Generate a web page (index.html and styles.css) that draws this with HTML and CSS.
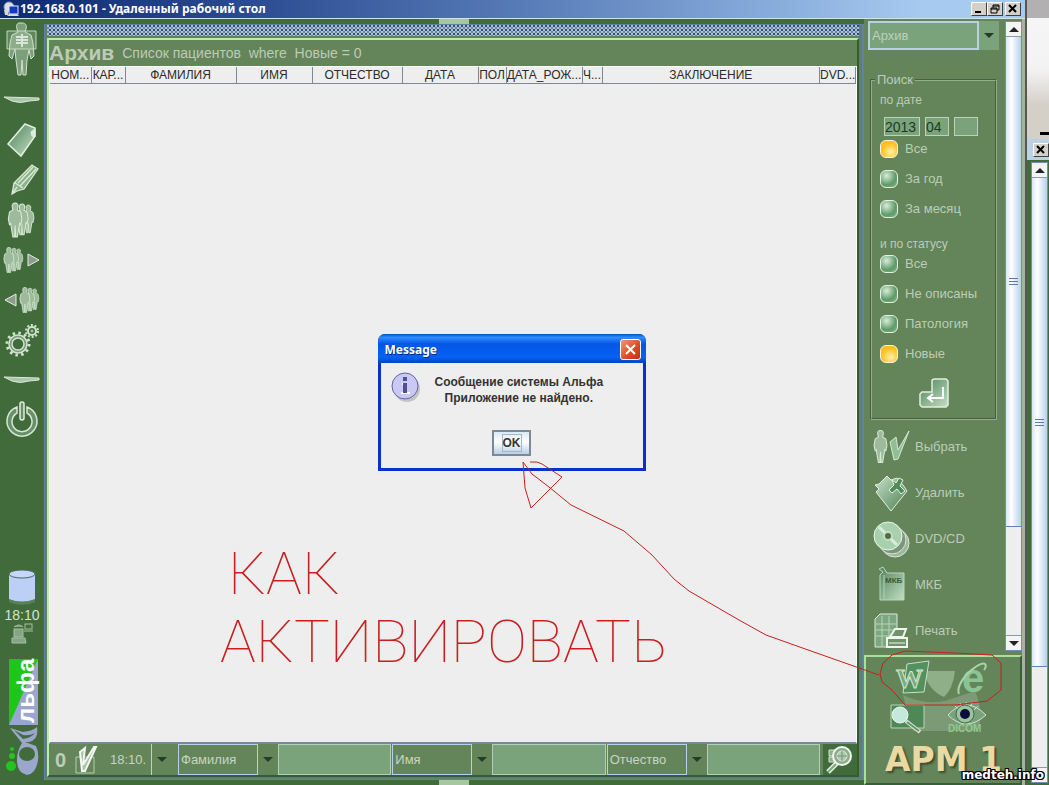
FILE: index.html
```
<!DOCTYPE html>
<html lang="ru">
<head>
    <meta charset="UTF-8">
    <meta name="viewport" content="width=device-width, initial-scale=1.0">
    <title>192.168.0.101 - Удаленный рабочий стол</title>
    <link rel="stylesheet" href="styles.css">
</head>
<body>
    <!-- Shared icon shapes -->
    <svg class="defs" width="0" height="0">
        <defs>
            <linearGradient id="glass" x1="0" y1="0" x2="1" y2="1">
                <stop offset="0" stop-color="#4c8258"/>
                <stop offset="1" stop-color="#c4dfc5"/>
            </linearGradient>
            <linearGradient id="glass2" x1="0" y1="0" x2="1" y2="1">
                <stop offset="0" stop-color="#c8e2c8"/>
                <stop offset="1" stop-color="#4c7f55"/>
            </linearGradient>
            <symbol id="person" viewBox="0 0 14 32">
                <path d="M7 1c2 0 3 1.500 2.500 3.500L9 7l3 2 1 6-1 5-1-1-1 6-1 6H7.500L7 21l-.5 10H5l-1-6-1-6-1 1-1-5 1-6 3-2-.5-2.500C4 2.500 5 1 7 1z" fill="#9dbb9b" stroke="#d5e8d4" stroke-width="1"/>
            </symbol>
            <symbol id="people" viewBox="0 0 28 34">
                <use href="#person" x="13" y="2" width="14" height="28"/>
                <use href="#person" x="7" y="1" width="14" height="31"/>
                <use href="#person" x="0" y="0" width="15" height="34"/>
            </symbol>
        </defs>
    </svg>

    <div class="screen">
        <div class="remote">
            <header class="titlebar">
                <svg width="18" height="17" viewBox="0 0 18 17">
                    <circle cx="7" cy="6" r="5" fill="#d9dfe8" stroke="#8a97ab"/>
                    <rect x="7" y="5" width="9" height="8" fill="#1338c8" stroke="#e6e6f2"/>
                    <path d="M5 15h12l-2-2H7zM2 9h4v5H3z" fill="#d8d8d0"/>
                </svg>
                <h1>192.168.0.101 - Удаленный рабочий стол</h1>
                <div class="window-buttons">
                    <button class="win-btn" aria-label="Свернуть"><svg width="12" height="10"><path d="M2 8h6" stroke="#000" stroke-width="2"/></svg></button>
                    <button class="win-btn" aria-label="Восстановить"><svg width="12" height="10"><path d="M4 4V1h6v5H8M4 2h6M2 4h6v5H2zM2 5h6" fill="none" stroke="#000"/></svg></button>
                    <button class="win-btn close" aria-label="Закрыть"><svg width="12" height="10"><path d="M2 1l7 7M9 1L2 8" stroke="#000" stroke-width="2"/></svg></button>
                </div>
            </header>

            <div class="workspace">
                <nav class="toolbar">
                    <button class="tool figure" aria-label="Пациент">
                        <svg width="34" height="56" viewBox="0 0 34 56">
                            <path d="M17 1c4 0 5 3 4 6l-1 3 6 3 2 8 1 13-3 3-2-9-2 10-1 15h-3l-1-15-1 15h-3l-2-15-1-11-3 10-3-3 1-13 2-8 6-3-1-3c-1-3 0-6 2-6z" fill="#7d9e7b" stroke="#d2e4cf"/>
                            <path d="M2 9h29v18H2z" fill="#bdd6b9" fill-opacity=".25" stroke="#c6d8c0"/>
                            <path d="M11 15h5m2 0h5M11 18h5m2 0h5M11 21h5m2 0h5M17 12v13" stroke="#d8e8d6" stroke-width="2"/>
                        </svg>
                    </button>
                    <div class="divider"><svg width="38" height="8"><path d="M1 1l35 1v2l-10 1q-9 3-17 0z" fill="#a8c6a8" stroke="#dbe9d8"/></svg></div>
                    <button class="tool" aria-label="Документ">
                        <svg width="34" height="38" viewBox="0 0 34 38"><path d="M20 3l10 4v8l-14 20L3 23z" fill="url(#glass)" stroke="#e0f0df" stroke-width="1.500"/><path d="M30 8l-4 3 1 4 3 1z" fill="#dcecdc" stroke="#e0f0df"/></svg>
                    </button>
                    <button class="tool" aria-label="Правка">
                        <svg width="34" height="38" viewBox="0 0 34 38"><path d="M7 33l2-11L27 4l6 4-14 20-7 2zM10 22l8 5M13 22L28 6M15 25L31 8M7 33l5-7" fill="#8cb28b" stroke="#dcecd9" stroke-width="1.300"/></svg>
                    </button>
                    <button class="tool" aria-label="Пациенты"><svg width="30" height="36"><use href="#people" width="30" height="36"/></svg></button>
                    <button class="tool" aria-label="Следующие">
                        <svg width="38" height="28"><use href="#people" width="22" height="28"/><path d="M25 8l11 6-11 6z" fill="#8e9c8c" stroke="#e2efdf"/></svg>
                    </button>
                    <button class="tool" aria-label="Предыдущие">
                        <svg width="38" height="28"><use href="#people" x="16" width="22" height="28"/><path d="M13 8L2 14l11 6z" fill="#8e9c8c" stroke="#e2efdf"/></svg>
                    </button>
                    <button class="tool" aria-label="Настройки">
                        <svg width="36" height="36" viewBox="0 0 36 36" fill="none" stroke="#cfe3cd">
                            <circle cx="14" cy="22" r="9" fill="#79997a" stroke-width="1.500"/>
                            <circle cx="14" cy="22" r="11" stroke-width="3" stroke-dasharray="2.500 3.260"/>
                            <circle cx="14" cy="22" r="6" fill="#426b3c" stroke-width="1.500"/>
                            <circle cx="28" cy="9" r="4" stroke-width="2"/>
                            <circle cx="28" cy="9" r="6" stroke-width="2" stroke-dasharray="2 1.770"/>
                            <circle cx="28" cy="9" r="1"/>
                        </svg>
                    </button>
                    <div class="divider"><svg width="38" height="8"><path d="M1 1l35 1v2l-10 1q-9 3-17 0z" fill="#a8c6a8" stroke="#dbe9d8"/></svg></div>
                    <button class="tool" aria-label="Выход">
                        <svg width="34" height="38" viewBox="0 0 34 38" fill="none">
                            <path d="M12 6A15 15 0 1 0 22 6v6a10 10 0 1 1-10 0z" fill="#68906a" stroke="#d6e7d3" stroke-width="1.500"/>
                            <rect x="15" y="1" width="4" height="18" rx="2" fill="#68906a" stroke="#e0eedf" stroke-width="1.500"/>
                        </svg>
                    </button>

                    <div class="status">
                        <svg width="30" height="38" viewBox="0 0 30 38">
                            <path d="M2 29v4q13 6 26 0v-4z" fill="#54805a"/>
                            <path d="M2 5v25q13 5 26 0V5z" fill="#bcd0f5"/>
                            <ellipse cx="15" cy="5" rx="13" ry="4" fill="#c5d7fb" stroke="#4a6a64"/>
                        </svg>
                        <time class="clock">18:10</time>
                        <svg width="24" height="22" viewBox="0 0 24 22" fill="#84a684" stroke="#a5c0a4">
                            <rect x="4" y="6" width="9" height="8"/><path d="M2 15h13l1 5H2zM4 4q5-4 9 0"/><rect x="15" y="1" width="7" height="5" fill="none"/><path d="M14 8h9"/>
                        </svg>
                    </div>
                    <svg class="logo" width="36" height="117" viewBox="0 0 36 117">
                        <path d="M5 0h29v66H5z" fill="#1fc51b"/>
                        <path d="M34 0v66H5z" fill="#9ba6cd"/>
                        <text class="logo-text" transform="translate(30 64) rotate(-90)">льфа</text>
                        <path d="M6 69l13 4q10-1 14-5 2 13-8 15h-4l11 4q3 6 2 14-2 14-11 15-10-2-10-15 0-9 5-17z" fill="#9ba6cd"/>
                        <path d="M10 71l9 9q8-1 12-6-5 3-12 2z" fill="#426b3c"/>
                        <ellipse cx="23" cy="95" rx="8" ry="7" fill="#426b3c"/>
                        <circle cx="7" cy="107" r="5" fill="#22c41d"/><circle cx="8" cy="97" r="3" fill="#22c41d"/><circle cx="8" cy="90" r="2" fill="#22c41d"/>
                    </svg>
                </nav>

                <div class="center">
                    <div class="handle"></div>
                    <main class="frame">
                        <div class="frame-grip"></div>
                        <div class="archive">
                            <div class="archive-head">
                                <h2>Архив</h2>
                                <p>Список пациентов&nbsp; where&nbsp; Новые = 0</p>
                            </div>
                            <div class="table-wrap">
                                <table class="patients">
                                    <thead>
                                        <tr>
                                            <th class="w-number">НОМ...</th>
                                            <th class="w-card">КАР...</th>
                                            <th class="w-surname">ФАМИЛИЯ</th>
                                            <th class="w-date">ИМЯ</th>
                                            <th class="w-patronymic">ОТЧЕСТВО</th>
                                            <th class="w-date">ДАТА</th>
                                            <th class="w-sex">ПОЛ</th>
                                            <th class="w-date">ДАТА_РОЖ...</th>
                                            <th class="w-h">Ч...</th>
                                            <th>ЗАКЛЮЧЕНИЕ</th>
                                            <th class="w-dvd">DVD...</th>
                                        </tr>
                                    </thead>
                                </table>
                            </div>
                            <div class="filterbar">
                                <div class="counter">
                                    <strong>0</strong>
                                    <svg width="24" height="32" viewBox="0 0 24 32"><path d="M2 13h18v16H2z" fill="none" stroke="#b4cdb1"/><path d="M6 8l5-4-2 17L20 3h2L11 27H8z" fill="#a9c1a7" stroke="#f2f7f0" stroke-width="2"/></svg>
                                </div>
                                <div class="combo time">
                                    <select aria-label="Время"><option>18:10.</option></select>
                                    <span class="arrow"></span>
                                </div>
                                <div class="filter">
                                    <div class="combo"><select aria-label="Поле 1"><option>Фамилия</option></select><span class="arrow"></span></div>
                                    <input type="text" aria-label="Фамилия">
                                </div>
                                <div class="filter">
                                    <div class="combo"><select aria-label="Поле 2"><option>Имя</option></select><span class="arrow"></span></div>
                                    <input type="text" aria-label="Имя">
                                </div>
                                <div class="filter">
                                    <div class="combo"><select aria-label="Поле 3"><option>Отчество</option></select><span class="arrow"></span></div>
                                    <input type="text" aria-label="Отчество">
                                </div>
                                <button class="find" aria-label="Найти">
                                    <svg width="30" height="30" viewBox="0 0 30 30"><path d="M5 5h7v6H5zM5 12h6v5H5z" fill="#8fb08e" stroke="#d4e5d2"/><path d="M13 18L4 27" stroke="#e4f1e2" stroke-width="5"/><path d="M12 19l-8 8" stroke="#80a880" stroke-width="2"/><circle cx="18" cy="11" r="9" fill="#8cac8b" stroke="#f0f6ef" stroke-width="2"/><circle cx="18" cy="11" r="5" fill="#b0cbaf" stroke="#e0ecdf"/><path d="M18 6v10M13 11h10" stroke="#73946f"/></svg>
                                </button>
                            </div>
                        </div>
                    </main>
                    <div class="handle"></div>
                </div>

                <aside class="side">
                    <div class="side-scroll">
                        <div class="side-content">
                            <div class="combo archive-select">
                                <select aria-label="Раздел"><option>Архив</option></select>
                                <span class="arrow"></span>
                            </div>
                            <fieldset class="search">
                                <legend>Поиск</legend>
                                <p>по дате</p>
                                <div class="date-row">
                                    <input class="year" type="text" value="2013" aria-label="Год">
                                    <input type="text" value="04" aria-label="Месяц">
                                    <input type="text" aria-label="День">
                                </div>
                                <label class="choice"><input type="radio" name="period" checked>Все</label>
                                <label class="choice"><input type="radio" name="period">За год</label>
                                <label class="choice"><input type="radio" name="period">За месяц</label>
                                <p class="by-status">и по статусу</p>
                                <label class="choice"><input type="radio" name="status">Все</label>
                                <label class="choice"><input type="radio" name="status">Не описаны</label>
                                <label class="choice"><input type="radio" name="status">Патология</label>
                                <label class="choice"><input type="radio" name="status" checked>Новые</label>
                                <button class="enter" aria-label="Применить">
                                    <svg width="30" height="30" viewBox="0 0 30 30"><path d="M16 1h11l2 2v24l-2 2H3l-2-2V16l2-2h10V3q0-2 3-2z" fill="url(#glass)" stroke="#e2f0e0" stroke-width="1.500"/><path d="M24 9v11H9m5-4l-5 4 5 4" fill="none" stroke="#fff" stroke-width="2"/></svg>
                                </button>
                            </fieldset>
                            <div class="actions">
                                <button class="action">
                                    <svg width="38" height="38" viewBox="0 0 38 38"><use href="#person" x="1" y="1" width="15" height="35"/><path d="M18 14l6-5 2 13L37 3 26 31l-4 1z" fill="#8fbf94" stroke="#d6e8d4"/></svg>
                                    Выбрать
                                </button>
                                <button class="action">
                                    <svg width="38" height="38" viewBox="0 0 38 38"><path d="M3 11l4-1 8-8 4 4 6-2 6 7 4 6-16 20L4 18l3-3z" fill="url(#glass2)" stroke="#dfeedd"/><path d="M20 6l4 3 3-5 4 2-3 6 5 5-4 3-4-5-5 4-3-3 5-5z" fill="#4e8b58" stroke="#e5f2e4"/></svg>
                                    Удалить
                                </button>
                                <button class="action">
                                    <svg width="38" height="38" viewBox="0 0 38 38"><circle cx="23" cy="23" r="14" fill="#a0b79c" stroke="#dce5d9"/><circle cx="20" cy="20" r="14" fill="#78987a" stroke="#dce5d9"/><circle cx="16" cy="16" r="14" fill="#a9d0ac" stroke="#edf5ec"/><circle cx="16" cy="16" r="4" fill="#4f6e49" stroke="#c5dcc3" stroke-width="2"/><path d="M7 7l6 6m6 6l6 6" stroke="#d8edda" stroke-width="3"/></svg>
                                    DVD/CD
                                </button>
                                <button class="action">
                                    <svg width="38" height="38" viewBox="0 0 38 38"><path d="M8 9l3-3-4-3 4-2 4 6h17v27H8z" fill="url(#glass)" stroke="#bed4bc"/><path d="M12 9v24" stroke="#b6d0b3"/><text class="book-text" x="13" y="17">МКБ</text></svg>
                                    МКБ
                                </button>
                                <button class="action">
                                    <svg width="38" height="38" viewBox="0 0 38 38"><path d="M3 7l5-5h17v33H3z" fill="#7ca77f" stroke="#dcecd9"/><path d="M4 12h20M4 18h20M4 24h20M10 4v30M17 4v30" stroke="#bad3b8"/><path d="M18 25l5-8h11l-3 8zM15 26h20v9H15z" fill="#71926d" stroke="#eef6ed" stroke-width="2"/><path d="M17 31h16" stroke="#eef6ed"/></svg>
                                    Печать
                                </button>
                            </div>
                        </div>
                        <div class="scrollbar">
                            <span class="scroll-btn"><i class="up"></i></span>
                            <span class="thumb"><i class="grip"></i></span>
                            <span class="scroll-btn last"><i class="down"></i></span>
                        </div>
                    </div>
                    <div class="launcher">
                        <div class="apps">
                            <svg class="swoosh" width="90" height="76" viewBox="0 0 90 76"><path d="M24 8h32q-2 18-11 26Q30 28 24 8z" fill="#8faf89"/><path d="M4 32q20 10 42 6l30-10q10 24 2 40H14z" fill="#89a684" fill-opacity=".65"/></svg>
                            <button class="app" aria-label="Word">
                                <svg width="50" height="40" viewBox="0 0 50 40"><path d="M22 5l22-3-5 31-21 1z" fill="#548f5f" stroke="#c6e1c8"/><text class="word-text" x="11" y="29">W</text></svg>
                            </button>
                            <button class="app" aria-label="Internet Explorer">
                                <svg width="50" height="40" viewBox="0 0 50 40"><text class="ie-text" x="19" y="33">e</text><path d="M16 35Q13 28 24 15 38 2 42 5q2 2-1 6" fill="none" stroke="#a8d4ac" stroke-width="2"/></svg>
                            </button>
                            <button class="app" aria-label="Просмотр">
                                <svg width="50" height="40" viewBox="0 0 50 40"><path d="M6 5h33v23H6z" fill="#4f8857" stroke="#b7d5b6"/><path d="M21 21l14 11" stroke="#dce9da" stroke-width="4"/><path d="M22 22l12 9" stroke="#69906a" stroke-width="2"/><circle cx="15" cy="15" r="8" fill="#c6e8dc" stroke="#edf7ee"/></svg>
                            </button>
                            <button class="app" aria-label="DICOM">
                                <svg width="50" height="40" viewBox="0 0 50 40"><path d="M5 15Q23-5 43 15 23 33 5 15zM12 6l4 4M17 3l2 5M23 2v5M29 3l-2 5M35 6l-4 4" fill="#79a17c" stroke="#d0e3cd"/><circle cx="22" cy="14" r="9" fill="#9dc3a0" stroke="#3d6d48"/><circle cx="22" cy="14" r="5" fill="#0c0d38"/><text class="dicom-text" x="5" y="32">DICOM</text></svg>
                            </button>
                        </div>
                        <p class="station">АРМ 1</p>
                    </div>
                </aside>
            </div>

            <div class="dialog" role="dialog" aria-labelledby="dialogTitle">
                <div class="dialog-title">
                    <h2 id="dialogTitle">Message</h2>
                    <button class="dialog-close" aria-label="Закрыть"><svg width="17" height="17"><path d="M4 4l9 9M13 4l-9 9" stroke="#fff" stroke-width="2"/></svg></button>
                </div>
                <div class="dialog-body">
                    <svg width="32" height="32" viewBox="0 0 32 32"><circle cx="16" cy="17" r="13" fill="#a9a9a9" fill-opacity=".6"/><circle cx="14" cy="14" r="13" fill="#c9c9f5" stroke="#66669c"/><path d="M11 12h3v8M10 21h9" stroke="#fff" fill="none" stroke-width="2"/><path d="M12 11h4v10h-4zM12 5h4v4h-4z" fill="#50508a"/></svg>
                    <p>Сообщение системы Альфа<br>Приложение не найдено.</p>
                </div>
                <button class="ok"><span>OK</span></button>
            </div>
        </div>

        <div class="behind">
            <div class="behind-top"></div>
            <div class="behind-title"><button class="win-btn" aria-label="Закрыть окно"><svg width="12" height="10"><path d="M2 1l7 7M9 1L2 8" stroke="#000" stroke-width="2"/></svg></button></div>
            <div class="scrollbar">
                <span class="scroll-btn"><i class="up"></i></span>
                <span class="thumb"><i class="grip"></i></span>
                <span class="scroll-btn last"><i class="down"></i></span>
            </div>
        </div>

        <!-- Red pen notes over the desktop -->
        <svg class="notes" width="1049" height="785" viewBox="0 0 1049 785">
            <text x="228" y="594">КАК</text>
            <text x="220" y="662">АКТИВИРОВАТЬ</text>
            <path d="M530 462h7l5 2 20 13-31 31-6-20-2-26 9 12 17 13 22 18 53 26 28 24 22 24 15 12 50 29 27 15 45 16 68 24"/>
            <path d="M880 674l3-11 9-8 13-4 50 2 37 2 9 8v27l-14 11-32 4h-50l-13-15-10-8z"/>
        </svg>
        <p class="watermark">medteh.info</p>
    </div>
</body>
</html>
```
FILE: styles.css
```
* {
    margin: 0;
    padding: 0;
    box-sizing: border-box;
}

body {
    font-family: "Liberation Sans", Arial, sans-serif;
    font-size: 13px;
    line-height: 16px;
    color: #bccdb8;
    background: #426b3c;
    overflow: hidden;
}

button,
input,
select {
    font: inherit;
    color: inherit;
    border: none;
    border-radius: 0;
    background: none;
    appearance: none;
    min-width: 0;
}

svg {
    display: block;
    flex: none;
    overflow: visible;
}

.defs {
    position: absolute;
}

.screen {
    position: relative;
    display: flex;
    height: 100vh;
}

.remote {
    position: relative;
    flex: 1;
    min-width: 0;
    display: flex;
    flex-direction: column;
    border-right: 2px solid #59584f;
}

/* Title bar */
.titlebar {
    display: flex;
    align-items: center;
    height: 19px;
    padding: 0 4px 0 2px;
    background: linear-gradient(90deg, #0d2a70, #2b4b91 24%, #5f83bd 55%, #a6caf0 90%);
    border-bottom: 1px solid #d6e2e0;
}

.titlebar h1 {
    flex: 1;
    font: bold 12px/16px "Noto Sans", Tahoma, sans-serif;
    color: #fff;
}

.window-buttons {
    display: flex;
}

.win-btn {
    width: 16px;
    height: 14px;
    padding: 1px;
    background: #d4d0c8;
    border: 1px solid;
    border-color: #fff #404040 #404040 #fff;
}

.win-btn.close {
    margin-left: 2px;
}

.workspace {
    flex: 1;
    display: flex;
    min-height: 0;
}

/* Left toolbar */
.toolbar {
    width: 44px;
    display: flex;
    flex-direction: column;
    align-items: center;
    padding-bottom: 9px;
}

.tool,
.divider {
    height: 40px;
    width: 44px;
    display: flex;
    align-items: center;
    justify-content: center;
}

.tool.figure {
    height: 61px;
}

.status {
    margin-top: auto;
    margin-bottom: 14px;
    display: flex;
    flex-direction: column;
    align-items: center;
}

.clock {
    font-size: 14px;
    color: #d4e2d0;
}

.logo-text {
    font: bold 24px "Liberation Sans", Arial, sans-serif;
    fill: #fff;
}

/* Center frame */
.center {
    flex: 1;
    min-width: 0;
    display: flex;
    flex-direction: column;
    align-items: center;
}

.handle {
    width: 30px;
    height: 5px;
    background: #a8c6a4;
}

.frame {
    flex: 1;
    width: 100%;
    min-height: 0;
    display: flex;
    flex-direction: column;
    padding: 0 3px 2px 2px;
    border: 1px solid #5f83a6;
    border-right-width: 2px;
    background: #61806c;
}

.frame-grip {
    height: 11px;
    margin-bottom: 2px;
    background-color: #a9c0de;
    background-image:
        conic-gradient(#35506c 25%, transparent 0),
        conic-gradient(#35506c 25%, transparent 0);
    background-size: 4px 4px;
    background-position: 0 0, 2px 2px;
    background-image:
        linear-gradient(#35506c, #35506c),
        linear-gradient(#35506c, #35506c);
    background: conic-gradient(#35506c 25%, #a9c0de 0 50%, #6d87a5 0 75%, #a9c0de 0) 0 0 / 4px 4px;
}

.archive {
    flex: 1;
    min-height: 0;
    display: flex;
    flex-direction: column;
    background: #64845a;
    border: 2px solid;
    border-color: #b4f0a4 #325c36 #325c36 #b4f0a4;
}

.archive-head {
    display: flex;
    align-items: center;
    gap: 8px;
    height: 26px;
    color: #bdcbb9;
}

.archive-head h2 {
    font-size: 21px;
    line-height: 24px;
}

.archive-head p {
    font-size: 14px;
}

.table-wrap {
    flex: 1;
    background: #eee;
    border: 1px solid #fff;
    border-bottom: 2px solid #70869a;
}

.patients {
    width: 100%;
    table-layout: fixed;
    border-collapse: collapse;
    font-size: 12px;
    line-height: 14px;
    color: #2b2b2b;
}

.patients th {
    height: 16px;
    font-weight: normal;
    white-space: nowrap;
    overflow: hidden;
    border-right: 1px solid #7a8a99;
    border-bottom: 1px solid #7a8a99;
}

.w-number { width: 41px; }
.w-card { width: 34px; }
.w-surname { width: 111px; }
.w-date { width: 76px; }
.w-patronymic { width: 90px; }
.w-sex { width: 28px; }
.w-h { width: 20px; }
.w-dvd { width: 36px; }

/* Filter bar */
.filterbar {
    display: flex;
    height: 31px;
}

.counter {
    display: flex;
    align-items: center;
    gap: 8px;
    padding-left: 6px;
    width: 59px;
}

.counter strong {
    font-size: 20px;
    color: #bccdb8;
}

.combo {
    display: flex;
}

.combo select {
    flex: 1;
    padding: 0 2px;
    border: 1px solid #b8cfe5;
    color: #c6d6c2;
}

.arrow {
    width: 20px;
    display: flex;
    align-items: center;
    justify-content: center;
}

.arrow::after {
    content: "";
    border: 5px solid transparent;
    border-top-color: #263c27;
    border-bottom: 0;
}

.combo.time {
    width: 70px;
    padding-right: 6px;
}

.combo.time select {
    border-left: none;
    border-top: none;
    border-bottom: none;
}

.filter {
    flex: 1;
    min-width: 0;
    display: grid;
    grid-template-columns: 100px 1fr;
    padding-right: 1px;
}

.filter input {
    width: 100%;
    background: #7ba37b;
    border: 1px solid #b5cdb9;
    color: #203b23;
}

.find {
    width: 34px;
    margin-left: 2px;
    padding-left: 1px;
    background: #426b3c;
}

/* Right panel */
.side {
    width: 161px;
    display: flex;
    flex-direction: column;
    background: #64845a;
    border-right: 3px solid #a5b39c;
}

.side-scroll {
    flex: 1;
    min-height: 0;
    display: flex;
    padding-top: 2px;
    border-bottom: 4px solid #64845a;
}

.side-content {
    flex: 1;
    min-width: 0;
    padding: 0 6px 0 4px;
}

.archive-select {
    height: 29px;
    background: #7ba37b;
}

.archive-select select {
    border-width: 2px;
    color: #bdd1b9;
}

.search {
    margin: 22px 2px 0;
    padding: 4px 8px 10px;
    border: 2px groove #8fb088;
}

.search legend {
    margin-left: -5px;
    padding: 0 2px;
}

.search p {
    font-size: 12px;
}

.date-row {
    display: flex;
    gap: 5px;
    margin: 9px 0 0 4px;
}

.date-row input {
    width: 24px;
    height: 19px;
    background: #7ba37b;
    border: 1px solid #bdd2bd;
    color: #203b23;
    font-size: 14px;
}

.date-row .year {
    width: 36px;
}

.choice {
    display: flex;
    align-items: center;
    gap: 7px;
    height: 30px;
    white-space: nowrap;
}

.choice:first-of-type {
    margin-top: -2px;
}

.choice input {
    width: 18px;
    height: 18px;
    border: 1px solid #e4f2e4;
    border-radius: 6px;
    background: radial-gradient(circle at 35% 30%, #d9ecd9, #5d9a68 60%, #85b98b);
}

.choice input:checked {
    border-color: #fff3d8;
    background: radial-gradient(circle at 60% 70%, #fff1b0, #fdc42c 55%, #f7b11c);
}

.by-status {
    margin: 12px 0 -3px;
}

.enter {
    display: block;
    margin: 9px auto 0;
}

.actions {
    padding-top: 4px;
}

.action {
    display: flex;
    align-items: center;
    gap: 5px;
    width: 100%;
    height: 46px;
    padding-left: 4px;
}

.book-text {
    font: bold 8px "Liberation Sans", Arial, sans-serif;
    fill: #345c3b;
}

/* Scrollbars */
.scrollbar {
    width: 17px;
    display: flex;
    flex-direction: column;
    background: #eee;
    border: 1px solid #6e90b5;
}

.scroll-btn {
    height: 15px;
    display: flex;
    align-items: center;
    justify-content: center;
    background: #f4f4f4;
    border-bottom: 1px solid #8a9bad;
}

.scroll-btn.last {
    margin-top: auto;
    border-bottom: none;
    border-top: 1px solid #8a9bad;
}

.up,
.down {
    border: 5px solid transparent;
}

.up {
    border-top: 0;
    border-bottom-color: #222;
}

.down {
    border-bottom: 0;
    border-top-color: #222;
}

.thumb {
    height: 78%;
    display: flex;
    align-items: center;
    justify-content: center;
    background: linear-gradient(90deg, #d8e5f8, #fff 35%, #b9d0ea);
    border-bottom: 1px solid #6382bf;
}

.grip {
    width: 9px;
    height: 7px;
    background: repeating-linear-gradient(#5b7da8 0 1px, transparent 1px 3px);
}

/* Launcher */
.launcher {
    height: 130px;
    padding: 1px 0 0 19px;
    border: 2px solid;
    border-color: #a8e09c #37603a #37603a #a8e09c;
}

.apps {
    position: relative;
    display: grid;
    grid-template-columns: 50px 50px;
    column-gap: 8px;
    width: 108px;
}

.app {
    position: relative;
    height: 41px;
}

.swoosh {
    position: absolute;
    left: 14px;
    top: 5px;
}

.word-text {
    font: bold 27px "Liberation Serif", serif;
    fill: #78aa7c;
    stroke: #d2e7d0;
}

.ie-text {
    font: bold 40px "Liberation Sans", Arial, sans-serif;
    fill: #8bc494;
}

.dicom-text {
    font: bold 10px "Liberation Sans", Arial, sans-serif;
    fill: #91c890;
}

.station {
    font: bold 33px/40px "DejaVu Sans", Verdana, sans-serif;
    color: #ead9a0;
    text-shadow: 2px 2px 2px #3a5031;
    white-space: nowrap;
}

/* Message dialog */
.dialog {
    position: absolute;
    top: 334px;
    left: calc(50% - 135px);
    width: 268px;
    padding: 0 3px 15px;
    background: #eee;
    border-radius: 7px 7px 0 0;
    box-shadow: inset 0 0 0 3px #0831c8;
    color: #333;
}

.dialog-title {
    display: flex;
    align-items: center;
    justify-content: space-between;
    height: 29px;
    margin: 0 -3px;
    padding: 2px 5px 0 7px;
    border-radius: 7px 7px 0 0;
    background: linear-gradient(#0a4ed0, #2e8cff 12%, #0556e4 35%, #0561f5 80%, #0442c4);
}

.dialog-title h2 {
    font: bold 12px/16px "Noto Sans", Tahoma, sans-serif;
    color: #fff;
    text-shadow: 1px 1px 0 #0a2a80;
}

.dialog-close {
    width: 21px;
    height: 21px;
    padding: 1px;
    border: 1px solid #fff;
    border-radius: 3px;
    background: linear-gradient(135deg, #f09478, #dc4a24 60%, #b8330f);
}

.dialog-body {
    display: flex;
    gap: 12px;
    padding: 9px 10px 0;
}

.dialog-body p {
    padding-top: 2px;
    font-size: 12px;
    font-weight: bold;
    text-align: center;
}

.ok {
    display: block;
    width: 39px;
    height: 26px;
    margin: 24px auto 0;
    border: 2px solid #7a8a99;
    background: linear-gradient(#dce8f5, #fff 45%, #b8cfe5);
    font-size: 12px;
    font-weight: bold;
}

.ok span {
    display: inline-block;
    border: 1px solid #a3b8cc;
}

/* Window behind the remote desktop */
.behind {
    width: 22px;
    display: flex;
    flex-direction: column;
    padding-bottom: 2px;
}

.behind-top {
    height: 139px;
    background:
        linear-gradient(#000, #000) right 132px / 9px 3px no-repeat,
        linear-gradient(#b2b0b0 18px, #f6f6f6 18px, #f2f2f2 70px, #d4d0c8 105px);
}

.behind-title {
    display: flex;
    justify-content: flex-end;
    height: 21px;
    padding-top: 4px;
    background: #bcd2e4;
}

.behind .scrollbar {
    flex: 1;
    margin: 2px 0 0 4px;
}

.behind .thumb {
    height: 79%;
}

/* Overlays */
.notes {
    position: absolute;
    top: 0;
    left: 0;
    pointer-events: none;
    fill: none;
    stroke: #c8201e;
}

.notes text {
    font: 100 60px Roboto, sans-serif;
    fill: #c8201e;
    stroke: none;
}

.watermark {
    position: absolute;
    right: 5px;
    bottom: 2px;
    font: bold 12px/16px "DejaVu Sans", Verdana, sans-serif;
    color: #fff;
    text-shadow: 1px 0 #000, -1px 0 #000, 0 1px #000, 0 -1px #000, 1px 1px #000, -1px -1px #000, 1px -1px #000, -1px 1px #000;
}
```
